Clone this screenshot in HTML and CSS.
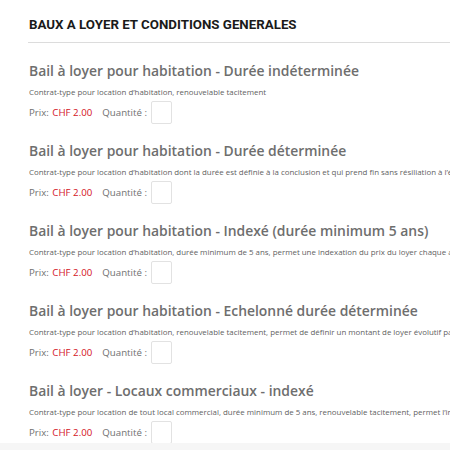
FILE: index.html
```html
<!DOCTYPE html>
<html lang="fr">
<head>
<meta charset="utf-8">
<link rel="stylesheet" href="styles.css">
</head>
<body>
<main class="page">
  <h2 class="section-title">BAUX A LOYER ET CONDITIONS GENERALES</h2>
  <div class="list">
    <div class="item">
      <h3 class="item-title">Bail à loyer pour habitation - Durée indéterminée</h3>
      <p class="item-desc">Contrat-type pour location d’habitation, renouvelable tacitement</p>
      <div class="item-row"><span class="label">Prix:</span><span class="price">CHF 2.00</span><span class="label qty">Quantité :</span><input class="qty-input" type="text"></div>
    </div>
    <div class="item">
      <h3 class="item-title">Bail à loyer pour habitation - Durée déterminée</h3>
      <p class="item-desc">Contrat-type pour location d’habitation dont la durée est définie à la conclusion et qui prend fin sans résiliation à l’échéance</p>
      <div class="item-row"><span class="label">Prix:</span><span class="price">CHF 2.00</span><span class="label qty">Quantité :</span><input class="qty-input" type="text"></div>
    </div>
    <div class="item">
      <h3 class="item-title">Bail à loyer pour habitation - Indexé (durée minimum 5 ans)</h3>
      <p class="item-desc">Contrat-type pour location d’habitation, durée minimum de 5 ans, permet une indexation du prix du loyer chaque année</p>
      <div class="item-row"><span class="label">Prix:</span><span class="price">CHF 2.00</span><span class="label qty">Quantité :</span><input class="qty-input" type="text"></div>
    </div>
    <div class="item">
      <h3 class="item-title">Bail à loyer pour habitation - Echelonné durée déterminée</h3>
      <p class="item-desc">Contrat-type pour location d’habitation, renouvelable tacitement, permet de définir un montant de loyer évolutif par paliers</p>
      <div class="item-row"><span class="label">Prix:</span><span class="price">CHF 2.00</span><span class="label qty">Quantité :</span><input class="qty-input" type="text"></div>
    </div>
    <div class="item">
      <h3 class="item-title">Bail à loyer - Locaux commerciaux - indexé</h3>
      <p class="item-desc">Contrat-type pour location de tout local commercial, durée minimum de 5 ans, renouvelable tacitement, permet l’indexation du loyer</p>
      <div class="item-row"><span class="label">Prix:</span><span class="price">CHF 2.00</span><span class="label qty">Quantité :</span><input class="qty-input" type="text"></div>
    </div>
  </div>
</main>
</body>
</html>
```
FILE: styles.css
```css
html, body {
  margin: 0;
  padding: 0;
}
body {
  background: #f6f6f6;
  overflow: hidden;
  width: 450px;
  height: 450px;
}
.page {
  background: #fff;
  height: 443px;
  padding-left: 28px;
  box-sizing: border-box;
  overflow: hidden;
}
.section-title {
  margin: 0;
  padding: 17px 0 9px 1px;
  font-family: Roboto, "Liberation Sans", sans-serif;
  font-weight: 700;
  font-size: 13.3px;
  line-height: 16px;
  color: #1a1a1a;
  border-bottom: 1px solid #dcdcdc;
}
.list {
  display: flex;
  flex-direction: column;
  padding-top: 18px;
  padding-left: 1px;
}
.item {
  display: flex;
  flex-direction: column;
  height: 80px;
}
.item-title {
  margin: 0;
  font-family: "Open Sans", sans-serif;
  font-weight: 600;
  font-size: 13.9px;
  line-height: 20px;
  color: #6e6e6e;
  white-space: nowrap;
}
.item-desc {
  margin: 6px 0 0;
  font-family: "Open Sans", sans-serif;
  font-size: 7.9px;
  line-height: 10px;
  color: #5f5f5f;
  white-space: nowrap;
}
.item-row {
  margin-top: 4px;
  display: flex;
  align-items: center;
  height: 23px;
  font-family: "Open Sans", sans-serif;
  font-size: 9.7px;
  line-height: 14px;
}
.label {
  color: #707070;
}
.price {
  color: #d3111e;
  margin-left: 3.5px;
}
.qty {
  margin-left: 10px;
}
.qty-input {
  margin: 0 0 0 4.5px;
  padding: 0;
  width: 21px;
  height: 23px;
  box-sizing: border-box;
  border: 1px solid #e2e2e2;
  border-radius: 2px;
  background: #fff;
  outline: none;
}
```
